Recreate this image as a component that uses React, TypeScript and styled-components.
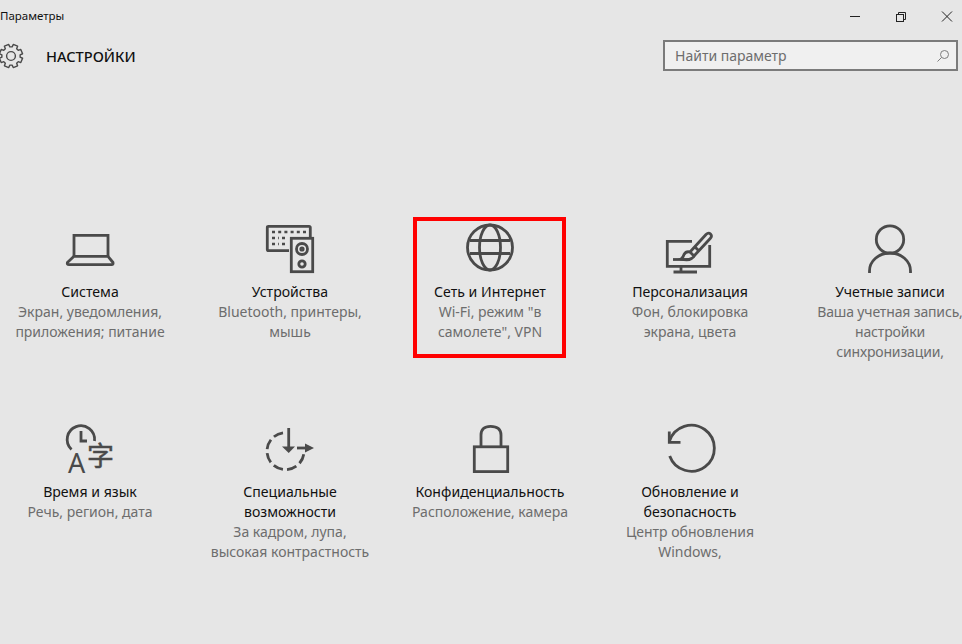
import React from "react";
import styled, { createGlobalStyle } from "styled-components";

const INK = "#4a4a4a";

const GlobalStyle = createGlobalStyle`
    html, body {
        margin: 0;
        background: #e6e6e6;
        overflow: hidden;
    }
    body {
        font-family: "Noto Sans", "Liberation Sans", sans-serif;
    }
`

const Page = styled.div`
    width: 962px;
    height: 644px;
    overflow: hidden;
    background: #e6e6e6;
`

const TitleBar = styled.div`
    display: flex;
    justify-content: space-between;
    height: 32px;
`

const WindowTitle = styled.div`
    font-size: 11.5px;
    line-height: 32px;
    color: #111;
`

const WindowButtons = styled.div`
    display: flex;
    gap: 34px;
    padding: 11px 9px 0 0;
`

const Header = styled.div`
    display: flex;
    align-items: center;
    justify-content: space-between;
    height: 48px;
    padding-right: 4px;
`

const Brand = styled.div`
    display: flex;
    align-items: center;
    gap: 22px;
`

const BrandTitle = styled.div`
    font-size: 14.6px;
    font-weight: 500;
    color: #111;
`

const SearchBox = styled.div`
    display: flex;
    align-items: center;
    justify-content: space-between;
    box-sizing: border-box;
    width: 295px;
    height: 31px;
    margin-top: -1px;
    padding: 0 6px 0 10px;
    border: 2px solid #7b7b7b;
    background: #f0f0f0;
`

const SearchHint = styled.span`
    font-size: 14px;
    color: #6d6d6d;
`

const TileGrid = styled.div`
    display: grid;
    grid-template-columns: repeat(5, 200px);
    grid-auto-rows: 200px;
    margin: 145px 0 0 -10px;
    width: 1000px;
`

const TileBody = styled.div`
    position: relative;
    display: flex;
    flex-direction: column;
    align-items: center;
    text-align: center;
`

const IconSlot = styled.div`
    width: 48px;
    height: 48px;
    margin-bottom: 9px;
`

const TileName = styled.div`
    font-size: 14.1px;
    line-height: 20px;
    color: #111;
    width: 170px;
`

const TileNote = styled.div<{ $tight?: boolean }>`
    font-size: 14px;
    line-height: 20px;
    color: #6d6d6d;
    width: 164px;
    letter-spacing: ${(p) => (p.$tight ? "-0.15px" : "normal")};
`

const Highlight = styled.div`
    position: absolute;
    left: 23px;
    top: -8px;
    width: 153px;
    height: 141px;
    box-sizing: border-box;
    border: 4px solid #ff0000;
`

const Icon = (props: { children: React.ReactNode }) => (
    <svg width="48" height="48" viewBox="0 0 48 48" fill="none" stroke={INK} strokeWidth="2.8" style={{ display: "block", overflow: "visible" }}>
        {props.children}
    </svg>
)

const gearPath = () => {
    // 8 teeth, outline only
    const pts: string[] = []
    const step = Math.PI / 4
    for (let i = 0; i < 8; i++) {
        const a = i * step + Math.PI / 8
        const at = (r: number, d: number) => {
            const x = 13 + r * Math.cos(a + d)
            const y = 13 + r * Math.sin(a + d)
            return x.toFixed(2) + " " + y.toFixed(2)
        }
        pts.push((i == 0 ? "M" : "L") + at(9.2, -0.27))
        pts.push("L" + at(11.8, -0.2))
        pts.push("L" + at(11.8, 0.2))
        pts.push("L" + at(9.2, 0.27))
    }
    return pts.join(" ") + " Z"
}

const GearIcon = () => (
    <svg width="26" height="26" viewBox="0 0 26 26" fill="none" stroke={INK} strokeWidth="1.4" style={{ display: "block", marginLeft: -2 }}>
        <path d={gearPath()} strokeLinejoin="round" />
        <circle cx="13" cy="13" r="4.4" />
    </svg>
)

const MinimizeIcon = () => (
    <svg width="12" height="12" viewBox="0 0 12 12" stroke="#222" strokeWidth="1">
        <path d="M1 5.5H11" />
    </svg>
)

const RestoreIcon = () => (
    <svg width="12" height="12" viewBox="0 0 12 12" fill="none" stroke="#222" strokeWidth="1">
        <rect x="1.5" y="3.5" width="7" height="7" />
        <path d="M3.5 3.5V1.5H10.5V8.5H8.5" />
    </svg>
)

const CloseIcon = () => (
    <svg width="12" height="12" viewBox="0 0 12 12" stroke="#222" strokeWidth="1">
        <path d="M1 .5L11 10.5M11 .5L1 10.5" />
    </svg>
)

const SearchIcon = () => (
    <svg width="14" height="14" viewBox="0 0 14 14" fill="none" stroke="#7d7d7d" strokeWidth="1">
        <circle cx="8.5" cy="5.5" r="4" />
        <path d="M5.5 8.5L1.5 12.5" />
    </svg>
)

const LaptopIcon = () => (
    <Icon>
        <path d="M8 31V10.3H42V31" />
        <path d="M8 31.3H42L47 37.5Q47.5 39.7 45.5 39.7H3Q.8 39.7 1.4 37.5Z" strokeLinejoin="round" />
    </Icon>
)

const DevicesIcon = () => (
    <Icon>
        <path d="M23 25.7H2.5Q1.3 25.7 1.3 24.5V2.5Q1.3 1.3 2.5 1.3H43Q44.3 1.3 44.3 2.5V12" />
        <rect x="25.3" y="13.3" width="21.4" height="33.4" />
        <circle cx="36" cy="24" r="5.5" />
        <circle cx="36" cy="24" r="1.2" />
        <circle cx="36" cy="39" r="3.2" />
        <path d="M6 7H40M6 13H13M16 13H22M6 19H13M16 19H22" strokeWidth="2.4" strokeDasharray="3 3.2" />
    </Icon>
)

const GlobeIcon = () => (
    <Icon>
        <circle cx="24" cy="22.5" r="22.5" />
        <ellipse cx="24" cy="22.5" rx="10.5" ry="22.5" />
        <path d="M4 15.5H44M4 28.5H44" />
    </Icon>
)

const BrushIcon = () => (
    <Icon>
        <path d="M26 16.3H1.3V41.3H43.7V20" />
        <path d="M15 41V47M7.5 47H31" />
        <path d="M7 34.5H24" />
        <path d="M24 27L40 9.5Q42.5 7 44.5 9Q46.5 11 44.2 13.5L28 31Z" strokeLinejoin="round" />
        <path d="M24 27Q20 26 18 29.5Q17 33 15 34Q22 36 25.5 33.5Q28 32 28 31" />
        <path d="M29 22L33 26" />
    </Icon>
)

const UserIcon = () => (
    <Icon>
        <circle cx="24" cy="14.5" r="13.7" />
        <path d="M3.5 48V46A20.5 18 0 0 1 44.5 46V48" />
    </Icon>
)

const TimeIcon = () => (
    <Icon>
        <path d="M5.5 24.5A13.7 13.7 0 1 1 28.5 16" />
        <path d="M15 6V16H21" />
        <text x="2" y="48" fontFamily="'Noto Sans', sans-serif" fontSize="27" fill={INK} stroke="none">A</text>
        <text x="21" y="41" fontFamily="'Noto Sans CJK SC', sans-serif" fontSize="27" fill={INK} stroke={INK} strokeWidth=".5">字</text>
    </Icon>
)

const AccessIcon = () => (
    <Icon>
        <path d="M17 7.8A18.5 18.5 0 1 0 38 27" strokeDasharray="10 4.2" />
        <path d="M22.7 3V24" />
        <path d="M16 21.5H29L22.7 28Z" fill={INK} stroke="none" />
        <path d="M31 23H41" />
        <path d="M39 18.5V27.5L48 23Z" fill={INK} stroke="none" />
    </Icon>
)

const LockIcon = () => (
    <Icon>
        <rect x="8.3" y="21.8" width="33.4" height="24.8" />
        <path d="M15 22V10Q15 1.3 24.5 1.3Q35 1.3 35 10V22" />
    </Icon>
)

const UpdateIcon = () => (
    <Icon>
        <path d="M3.5 16A23 23 0 1 1 3.7 31" />
        <path d="M3.3 6.5V17.3H14.5" />
    </Icon>
)

type tileProp = {
    id: string,
    icon: React.ReactNode,
    name: string[],
    note: string[],
    marked?: boolean,
    tight?: boolean
}

const tiles: tileProp[] = [
    { id: "system", icon: <LaptopIcon />, name: ["Система"], note: ["Экран, уведомления,", "приложения; питание"] },
    { id: "devices", icon: <DevicesIcon />, name: ["Устройства"], note: ["Bluetooth, принтеры,", "мышь"] },
    { id: "network", icon: <GlobeIcon />, name: ["Сеть и Интернет"], note: ["Wi-Fi, режим \"в", "самолете\", VPN"], marked: true },
    { id: "personal", icon: <BrushIcon />, name: ["Персонализация"], note: ["Фон, блокировка", "экрана, цвета"] },
    { id: "accounts", icon: <UserIcon />, name: ["Учетные записи"], note: ["Ваша учетная запись,", "настройки", "синхронизации,"], tight: true },
    { id: "time", icon: <TimeIcon />, name: ["Время и язык"], note: ["Речь, регион, дата"] },
    { id: "access", icon: <AccessIcon />, name: ["Специальные", "возможности"], note: ["За кадром, лупа,", "высокая контрастность"] },
    { id: "privacy", icon: <LockIcon />, name: ["Конфиденциальность"], note: ["Расположение, камера"] },
    { id: "update", icon: <UpdateIcon />, name: ["Обновление и", "безопасность"], note: ["Центр обновления", "Windows,"] }
]

const Tile = (props: { data: tileProp }) => (
    <TileBody>
        {props.data.marked && <Highlight />}
        <IconSlot>{props.data.icon}</IconSlot>
        {props.data.name.map((line) => <TileName key={line}>{line}</TileName>)}
        {props.data.note.map((line) => <TileNote key={line} $tight={props.data.tight}>{line}</TileNote>)}
    </TileBody>
)

export default function App() {
    return (
        <Page>
            <GlobalStyle />
            <TitleBar>
                <WindowTitle>Параметры</WindowTitle>
                <WindowButtons>
                    <MinimizeIcon />
                    <RestoreIcon />
                    <CloseIcon />
                </WindowButtons>
            </TitleBar>
            <Header>
                <Brand>
                    <GearIcon />
                    <BrandTitle>НАСТРОЙКИ</BrandTitle>
                </Brand>
                <SearchBox>
                    <SearchHint>Найти параметр</SearchHint>
                    <SearchIcon />
                </SearchBox>
            </Header>
            <TileGrid>
                {tiles.map((data) => <Tile key={data.id} data={data} />)}
            </TileGrid>
        </Page>
    )
}
